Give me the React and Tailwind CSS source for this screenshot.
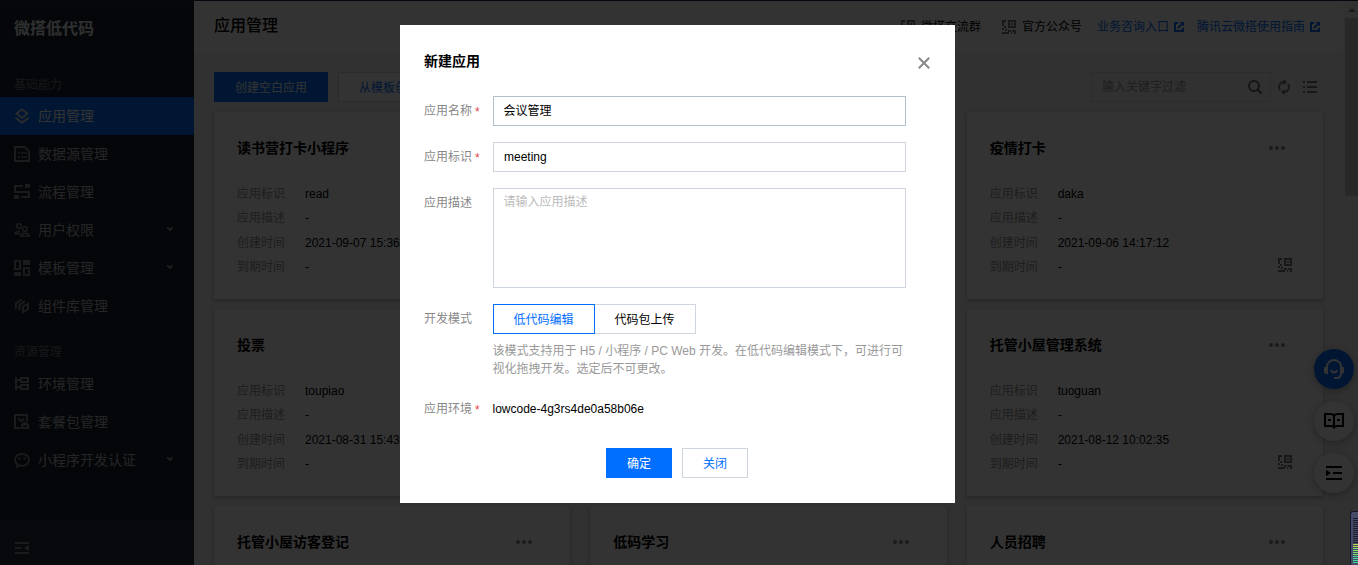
import React from "react";

const FONT = "font-['Liberation_Sans','Noto_Sans_CJK_SC',sans-serif]";

/* ---------- icons ---------- */

function Svg({ size = 16, box, className = "", children }) {
  return (
    <svg
      width={size}
      height={size}
      viewBox={`0 0 ${box || size} ${box || size}`}
      fill="none"
      stroke="currentColor"
      strokeWidth="2"
      className={`block shrink-0 ${className}`}
    >
      {children}
    </svg>
  );
}

const AppsIcon = () => (
  <Svg>
    <path d="M8 1.400 13.400 5.600 8 9.800 2.600 5.600Z" strokeWidth="1.800" />
    <path d="M1.400 9.800 8 14.600l6.600-4.800" strokeWidth="1.800" />
  </Svg>
);
const DataIcon = () => (
  <Svg>
    <path d="M1 1h9.800L15 5v10H1Z" />
    <path d="M4 7h2M7 7h6M4 11h2M7 11h6" strokeWidth="1.600" />
  </Svg>
);
const FlowIcon = () => (
  <Svg>
    <path d="M9 2H1v6h14v5H7" />
    <path d="M11 0h5v4h-5zM0 11h5v4H0z" fill="currentColor" stroke="none" />
  </Svg>
);
const UsersIcon = () => (
  <Svg>
    <g strokeWidth="1.600">
      <circle cx="5" cy="4" r="2.300" />
      <circle cx="10.800" cy="7" r="2.300" />
      <path d="M6 9.300C3 9.300.9 9.800.9 11.600H6M6.800 14.200h8.400c0-2-1.600-2.800-4.200-2.800s-4.200.8-4.200 2.800Z" />
    </g>
  </Svg>
);
const TemplateIcon = () => (
  <Svg>
    <path d="M1 1h5v8H1zM10 8h5v7h-5z" />
    <path d="M9 0h7v5H9zM0 12h7v4H0z" fill="currentColor" stroke="none" />
  </Svg>
);
const ComponentIcon = () => (
  <Svg>
    <path d="M2 11V5.600L7.500 1.600M5.500 12.500V7L11 3M9 15.500V8.600l5-2.800v5.400L9 14" />
  </Svg>
);
const EnvIcon = () => (
  <Svg>
    <path d="M2 1v13M2 4h4M2 11h4M7 2h7v4H7zM7 9h7v4H7z" />
  </Svg>
);
const PackageIcon = () => (
  <Svg>
    <path d="M6 14H1V1h12v6" />
    <path d="M4 4.500 7 7l3-2.500" />
    <path d="M8 10.500h6V14H8zM9.800 10V8.800h2.400V10" />
  </Svg>
);
const WechatIcon = () => (
  <Svg>
    <path d="M8 1.800c4 0 7 2.600 7 6s-3 6-7 6c-1 0-2-.1-2.800-.5L3 14.600l.3-2.500C1.800 11 1 9.500 1 7.800c0-3.400 3-6 7-6Z" strokeWidth="1.800" />
    <circle cx="5.400" cy="6.400" r="1.200" fill="currentColor" stroke="none" />
    <circle cx="10.600" cy="6.400" r="1.200" fill="currentColor" stroke="none" />
  </Svg>
);
const CollapseIcon = () => (
  <Svg>
    <path d="M1 3h14M1 8h7M1 13h14" />
    <path d="M15 5v6l-5-3Z" fill="currentColor" stroke="none" />
  </Svg>
);
const ChevronIcon = () => (
  <svg width="8" height="6" viewBox="0 0 8 6" fill="none" stroke="currentColor" strokeWidth="1.500" className="block">
    <path d="M1.200 1.200 4 4l2.800-2.800" />
  </svg>
);
const QrIcon = () => (
  <svg width="14" height="14" viewBox="0 0 14 14" fill="currentColor" shapeRendering="crispEdges" className="block shrink-0">
    <path d="M0 0h4v2H2v2H0zM0 4h2v2H0zM2 6h2v2H2zM0 8h2v2H0zM6 0h8v8H6zM8 2v4h4V2z" fillRule="evenodd" />
    <path d="M9 3h2v2H9zM3 9h2v2H3zM0 12h5v2H0zM6 10h3v2H6zM5 12h2v2H5zM10 10h4v4h-2v-2h-2zM9 12h1v2H9z" />
  </svg>
);
const LinkIcon = () => (
  <svg width="10" height="10" viewBox="0 0 10 10" fill="none" stroke="currentColor" strokeWidth="2" className="block shrink-0">
    <path d="M4 1H1v8h8V6" />
    <path d="M3.800 6.200 8.500 1.500" strokeWidth="1.800" />
    <path d="M5.500 0H10v4.500Z" fill="currentColor" stroke="none" />
  </svg>
);
const SearchIcon = () => (
  <Svg size={14}>
    <circle cx="6" cy="6" r="5" />
    <path d="m9.600 9.600 4 4" strokeWidth="2.200" />
  </Svg>
);
const RefreshIcon = () => (
  <svg width="12" height="16" viewBox="0 0 12 16" fill="none" stroke="currentColor" strokeWidth="1.800" className="block">
    <path d="M6.500 3H6a5 5 0 0 0-3.800 8.200M5.500 13H6A5 5 0 0 0 9.800 4.800" />
    <path d="M5.500 0v6l3.500-3zM6.500 10v6L3 13z" fill="currentColor" stroke="none" />
  </svg>
);
const ListIcon = () => (
  <svg width="14" height="12" viewBox="0 0 14 12" fill="currentColor" className="block">
    <path d="M0 0h2v2H0zM4 0h10v2H4zM0 5h2v2H0zM4 5h10v2H4zM0 10h2v2H0zM4 10h10v2H4z" />
  </svg>
);
const DotsIcon = () => (
  <svg width="16" height="4" viewBox="0 0 16 4" fill="currentColor" className="block">
    <circle cx="2" cy="2" r="2" />
    <circle cx="8" cy="2" r="2" />
    <circle cx="14" cy="2" r="2" />
  </svg>
);
const HeadsetIcon = () => (
  <Svg size={20}>
    <path d="M3 8V7.500a7 6.500 0 0 1 14 0V14c0 3-1.500 5-4 5h-3" />
    <path d="M0 8h4v7H2l-2-1.500zM16 8h4v5.500L18 15h-2z" fill="currentColor" stroke="none" />
    <path d="M6.800 11.200c1.500 3.200 4.900 3.200 6.400 0" />
  </Svg>
);
const BookIcon = () => (
  <Svg size={20}>
    <path d="M10 4.500C9 3.300 8 3 6.500 3H1v12h6c1.500 0 2.300.5 3 1.500.7-1 1.500-1.500 3-1.500h6V3h-5.500C12 3 11 3.300 10 4.500ZM10 4v13M4 9h3M13 9h3" />
  </Svg>
);
const IndentIcon = () => (
  <Svg size={16}>
    <path d="M0 2h16M7 8h9M0 14h16" />
    <path d="M0 4.800v6.400L5 8Z" fill="currentColor" stroke="none" />
  </Svg>
);

/* ---------- sidebar ---------- */

const BASE_MENU = [
  { label: "应用管理", icon: AppsIcon, active: true },
  { label: "数据源管理", icon: DataIcon },
  { label: "流程管理", icon: FlowIcon },
  { label: "用户权限", icon: UsersIcon, expandable: true },
  { label: "模板管理", icon: TemplateIcon, expandable: true },
  { label: "组件库管理", icon: ComponentIcon },
];
const RESOURCE_MENU = [
  { label: "环境管理", icon: EnvIcon },
  { label: "套餐包管理", icon: PackageIcon },
  { label: "小程序开发认证", icon: WechatIcon, expandable: true },
];

function MenuItem({ label, icon: Icon, active, expandable }) {
  return (
    <li
      className={`flex h-[38px] items-center pl-3.5 pr-5 text-sm ${
        active ? "bg-[#006eff] text-white" : "text-[#b4b8bd]"
      }`}
    >
      <span className={active ? "text-[#d8dce2]" : "text-[#80858c]"}>
        <Icon />
      </span>
      <span className="ml-2 flex-1">{label}</span>
      {expandable && <span className="-mt-0.5"><ChevronIcon /></span>}
    </li>
  );
}

function Sidebar() {
  return (
    <aside className="flex w-[194px] shrink-0 flex-col bg-[#1b222d]">
      <h1 className="mt-4 px-3.5 text-base leading-6 font-bold text-[#e6e8eb]">微搭低代码</h1>
      <div className="mt-[34px] px-3.5 text-xs leading-5 text-[#6c7682]">基础能力</div>
      <ul className="mt-0.5">
        {BASE_MENU.map((m) => (
          <MenuItem key={m.label} {...m} />
        ))}
      </ul>
      <div className="mt-[17px] px-3.5 text-xs leading-5 text-[#6c7682]">资源管理</div>
      <ul className="mt-[3px]">
        {RESOURCE_MENU.map((m) => (
          <MenuItem key={m.label} {...m} />
        ))}
      </ul>
      <div className="mt-auto flex h-[45px] items-center bg-[#262f3e] px-3.5 pt-[11px] text-[#80858c]">
        <CollapseIcon />
      </div>
    </aside>
  );
}

/* ---------- main ---------- */

const APPS = [
  { title: "读书营打卡小程序", id: "read", created: "2021-09-07 15:36" },
  {},
  { title: "疫情打卡", id: "daka", created: "2021-09-06 14:17:12" },
  { title: "投票", id: "toupiao", created: "2021-08-31 15:43" },
  {},
  { title: "托管小屋管理系统", id: "tuoguan", created: "2021-08-12 10:02:35" },
  { title: "托管小屋访客登记" },
  { title: "低码学习" },
  { title: "人员招聘" },
];

function AppCard({ title, id, created }) {
  const rows = [
    ["应用标识", id],
    ["应用描述", "-"],
    ["创建时间", created],
    ["到期时间", "-"],
  ];
  return (
    <article className="flex h-[187px] flex-col bg-white px-[23px] pt-[25px] shadow-[0_2px_4px_rgba(54,58,80,0.32)]">
      {title && (
        <div className="flex h-[22px] items-center justify-between pr-[15px]">
          <h3 className="text-sm font-bold text-black">{title}</h3>
          <span className="text-[#888]">
            <DotsIcon />
          </span>
        </div>
      )}
      {id && (
        <div className="mt-[23px] flex items-end justify-between pr-2">
          <dl className="text-xs leading-[24.3px]">
            {rows.map(([k, v]) => (
              <div key={k} className="flex">
                <dt className="w-[68px] text-[#959595]">{k}</dt>
                <dd className="text-black">{v}</dd>
              </div>
            ))}
          </dl>
          <span className="mb-[7px] text-[#777]">
            <QrIcon />
          </span>
        </div>
      )}
    </article>
  );
}

function Header() {
  return (
    <header className="flex h-[51px] shrink-0 items-center justify-between bg-white pr-[23px] pl-5">
      <h2 className="pb-0.5 text-base font-medium text-black">应用管理</h2>
      <div className="flex items-center text-xs text-black">
        <span className="text-[#777]"><QrIcon /></span>
        <span className="ml-[6px]">微搭交流群</span>
        <span className="ml-[21px] text-[#777]"><QrIcon /></span>
        <span className="ml-[6px]">官方公众号</span>
        <a className="ml-[15px] flex items-center gap-[5px] text-[#006eff]">
          业务咨询入口 <LinkIcon />
        </a>
        <a className="ml-[13px] flex items-center gap-[5px] text-[#006eff]">
          腾讯云微搭使用指南 <LinkIcon />
        </a>
      </div>
    </header>
  );
}

function Toolbar() {
  return (
    <div className="flex h-[30px] items-center">
      <button className="h-[30px] w-[114px] bg-[#006eff] pt-0.5 text-xs text-white">创建空白应用</button>
      <button className="ml-2.5 h-[30px] w-[126px] border border-[#cfd5de] bg-white pt-0.5 text-xs text-[#006eff]">
        从模板创建应用
      </button>
      <div className="ml-auto flex h-[30px] w-[180px] items-center justify-between border border-[#d5dae2] pr-2 pl-2.5 text-xs text-[#999]">
        <span>输入关键字过滤</span>
        <span className="text-[#666]"><SearchIcon /></span>
      </div>
      <span className="ml-[7px] text-[#777]"><RefreshIcon /></span>
      <span className="mr-1.5 ml-[13px] text-[#777]"><ListIcon /></span>
    </div>
  );
}

function Main() {
  return (
    <main className="flex min-w-0 flex-1 flex-col overflow-hidden bg-[#f2f2f2]">
      <Header />
      <div className="flex flex-col pt-5 pr-5 pl-5">
        <Toolbar />
        <div className="mt-2.5 grid grid-cols-3 gap-x-5 gap-y-2.5">
          {APPS.map((a, i) => (
            <AppCard key={i} {...a} />
          ))}
        </div>
      </div>
    </main>
  );
}

function Scrollbar() {
  return (
    <div className="flex w-[15px] shrink-0 flex-col items-end bg-[#f4f4f4]">
      <div className="flex h-[17px] w-[13px] items-center justify-center text-[#888]">
        <svg width="8" height="4" viewBox="0 0 8 4" fill="currentColor">
          <path d="M4 0 8 4H0Z" />
        </svg>
      </div>
      <div className="h-[178px] w-[13px] bg-[#c6c6c6]" />
    </div>
  );
}

function FloatButtons() {
  return (
    <div className="absolute top-[349px] right-1 flex flex-col gap-3">
      <div className="flex size-10 items-center justify-center rounded-full bg-[#006eff] text-white shadow-[0_2px_8px_rgba(54,58,80,0.4)]">
        <HeadsetIcon />
      </div>
      <div className="flex size-10 items-center justify-center rounded-full bg-white text-black shadow-[0_2px_8px_rgba(54,58,80,0.4)]">
        <BookIcon />
      </div>
      <div className="flex size-10 items-center justify-center rounded-full bg-white text-black shadow-[0_2px_8px_rgba(54,58,80,0.4)]">
        <IndentIcon />
      </div>
    </div>
  );
}

/* ---------- dialog ---------- */

function Field({ label, required, children, className = "" }) {
  return (
    <div className={`flex items-start ${className}`}>
      <div className="flex h-[30px] w-[69px] shrink-0 items-center text-[#888]">
        {label}
        {required && <span className="mt-0.5 ml-[3px] text-[#e54545]">*</span>}
      </div>
      {children}
    </div>
  );
}

function Dialog() {
  return (
    <section className="absolute top-[25px] left-[400px] flex h-[478px] w-[555px] flex-col bg-white px-6 text-xs text-black">
      <div className="mt-[25px] flex h-[22px] items-center justify-between pr-px">
        <h2 className="text-sm font-bold">新建应用</h2>
        <svg width="12" height="12" viewBox="0 0 12 12" stroke="#888" strokeWidth="2" className="mt-1">
          <path d="m.8.8 10.400 10.400M11.200.8.8 11.200" />
        </svg>
      </div>
      <Field label="应用名称" required className="mt-6">
        <div className="flex h-[30px] w-[413px] items-center border border-[#b3bfcc] px-[9.5px]">会议管理</div>
      </Field>
      <Field label="应用标识" required className="mt-4">
        <div className="flex h-[30px] w-[413px] items-center border border-[#cfd5de] px-2.5">meeting</div>
      </Field>
      <Field label="应用描述" className="mt-4">
        <div className="h-[100px] w-[413px] border border-[#cfd5de] px-[9.5px] py-1 leading-[18px] text-[#bbb]">
          请输入应用描述
        </div>
      </Field>
      <Field label="开发模式" className="mt-4">
        <div className="w-[418px]">
          <div className="flex h-[30px]">
            <div className="flex w-[102px] items-center justify-center border border-[#006eff] pt-0.5 pr-px text-[#006eff]">
              低代码编辑
            </div>
            <div className="flex w-[101px] items-center justify-center border border-l-0 border-[#cfd5de] pt-0.5 pr-px">
              代码包上传
            </div>
          </div>
          <p className="mt-2 -ml-[0.5px] leading-[18px] text-[#999]">
            该模式支持用于 H5 / 小程序 / PC Web 开发。在低代码编辑模式下，可进行可
            <br />
            视化拖拽开发。选定后不可更改。
          </p>
        </div>
      </Field>
      <Field label="应用环境" required className="mt-4">
        <div className="-ml-[0.5px] flex h-[30px] items-center">lowcode-4g3rs4de0a58b06e</div>
      </Field>
      <div className="mt-6 flex justify-center gap-2.5 pr-px">
        <button className="h-[30px] w-[66px] bg-[#006eff] pt-0.5 text-white">确定</button>
        <button className="h-[30px] w-[66px] border border-[#cfd5de] pt-0.5 text-[#006eff]">关闭</button>
      </div>
    </section>
  );
}

/* Level meter docked at the window's right edge */
function Meter() {
  return (
    <div className="absolute right-0 bottom-0 h-[54px] w-2 overflow-hidden rounded-tl-[3px] border-t border-l border-[#15162a] bg-[#454b66]">
      <svg width="7" height="53" viewBox="0 0 7 53" shapeRendering="crispEdges" className="block">
        {Array.from({ length: 23 }, (_, i) => (
          <rect
            key={i}
            x="2"
            y={6 + i * 2}
            width="5"
            height="1"
            fill={i < 13 ? "#1b1d2c" : i < 15 ? "#b9d94a" : i < 19 ? "#7fdc6a" : "#45d9a0"}
          />
        ))}
      </svg>
    </div>
  );
}

export default function App() {
  return (
    <div className={`relative flex h-[565px] w-full overflow-hidden border-t border-[#07070f] bg-white ${FONT}`}>
      <Sidebar />
      <Main />
      <Scrollbar />
      <div className="absolute inset-x-0 -top-px bottom-0">
        <FloatButtons />
        <div className="absolute inset-0 bg-black/80" />
        <Dialog />
        <Meter />
      </div>
    </div>
  );
}
